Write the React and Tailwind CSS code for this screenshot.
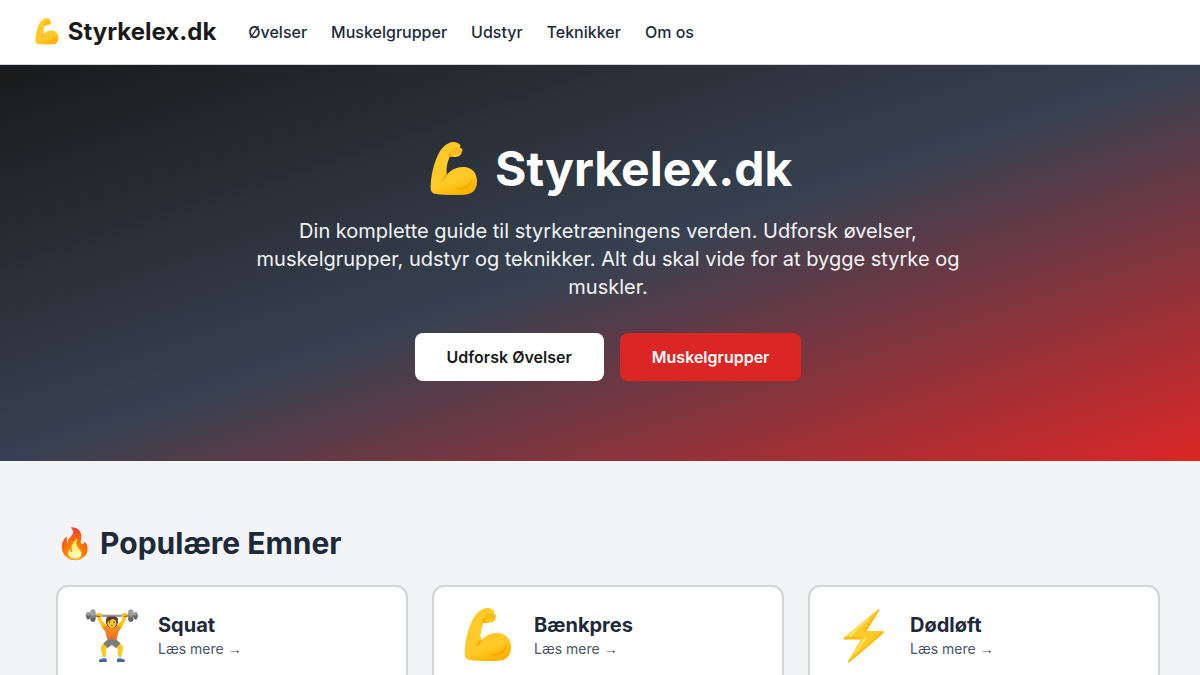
const navLinks = ['Øvelser', 'Muskelgrupper', 'Udstyr', 'Teknikker', 'Om os'];

const topics = [
  { icon: '🏋️', title: 'Squat' },
  { icon: <Biceps id="card" />, title: 'Bænkpres' },
  { icon: '⚡', title: 'Dødløft' },
];

// Sized in em so it scales like an emoji next to text
function Biceps({ id }) {
  return (
    <svg
      viewBox="0 45 180 126"
      className="inline-block h-[0.875em] w-[1.25em] overflow-visible align-[-0.125em]"
      aria-hidden="true"
    >
      <defs>
        <linearGradient id={`biceps-${id}`} x1="0.4" y1="0.4" x2="0.6" y2="1">
          <stop offset="0.55" stopColor="#ffca28" />
          <stop offset="1" stopColor="#ffb300" />
        </linearGradient>
      </defs>
      <path
        d="M20 158C20 126 28 84 47 50C57 34 74 21 88 21C98 21 106 25 109 31L108 38C116 40 118 47 113 50C114 60 103 67 87 66C83 66 79 63 77 66C69 82 66 102 68 122C77 105 98 94 121 96C146 98 159 116 159 139C159 164 146 178 121 179C91 181 59 180 36 177C24 175 20 168 20 158Z"
        fill={`url(#biceps-${id})`}
      />
      <path
        d="M50 138C59 132 64 122 67 108L69 119L75 112C68 127 62 135 50 138ZM92 158C116 162 139 151 145 127C149 155 118 175 92 158ZM77 66C71 59 75 53 80 48C78 55 81 62 89 66Z"
        fill="#f5a900"
      />
      <path
        d="M84 46C87 39 92 37 97 42M97 42C102 37 107 42 102 47L111 49C110 54 104 55 99 51M86 50C91 45 98 49 94 54C91 58 86 55 86 50"
        fill="none"
        stroke="#efa000"
        strokeWidth="2.5"
        strokeLinecap="round"
      />
    </svg>
  );
}

function Header() {
  return (
    <header className="border-b border-gray-300 bg-white">
      <div className="flex h-16 items-center gap-8 px-8">
        <a href="#" className="text-2xl font-bold text-[#1a1a1a]">
          <Biceps id="logo" /> Styrkelex.dk
        </a>
        <nav className="flex gap-6 font-medium text-gray-800">
          {navLinks.map((link) => (
            <a key={link} href="#">
              {link}
            </a>
          ))}
        </nav>
      </div>
    </header>
  );
}

function Hero() {
  return (
    <section className="bg-[linear-gradient(to_bottom_right,#1a1a1a,#374151,#dc2626)] py-20 pr-4 pl-8 text-center text-white">
      <h1 className="text-5xl font-bold">
        <Biceps id="hero" /> Styrkelex.dk
      </h1>
      <p className="mx-auto mt-6 max-w-3xl text-xl text-gray-100">
        Din komplette guide til styrketræningens verden. Udforsk øvelser, muskelgrupper, udstyr og teknikker. Alt du skal
        vide for at bygge styrke og muskler.
      </p>
      <div className="mt-8 flex justify-center gap-4 font-semibold">
        <a href="#" className="rounded-lg bg-white px-8 py-3 text-[#1a1a1a]">
          Udforsk Øvelser
        </a>
        <a href="#" className="rounded-lg bg-[#dc2626] px-8 py-3">
          Muskelgrupper
        </a>
      </div>
    </section>
  );
}

function TopicCard({ topic }) {
  return (
    <a href="#" className="flex items-center gap-4 rounded-xl border-2 border-gray-300 bg-white p-6">
      <span className="text-5xl">{topic.icon}</span>
      <div>
        <h3 className="text-xl font-bold text-gray-800">{topic.title}</h3>
        <p className="text-sm text-gray-600">
          Læs mere <span className="font-['Liberation_Sans',sans-serif]">→</span>
        </p>
      </div>
    </a>
  );
}

export default function App() {
  return (
    <div className="h-screen overflow-hidden bg-gray-100 font-['Inter',sans-serif]">
      <Header />
      <Hero />
      <main className="py-16 pr-10 pl-14">
        <h2 className="mb-6 text-3xl font-bold text-gray-800">🔥 Populære Emner</h2>
        <div className="grid grid-cols-3 gap-6">
          {topics.map((topic) => (
            <TopicCard key={topic.title} topic={topic} />
          ))}
        </div>
      </main>
    </div>
  );
}
